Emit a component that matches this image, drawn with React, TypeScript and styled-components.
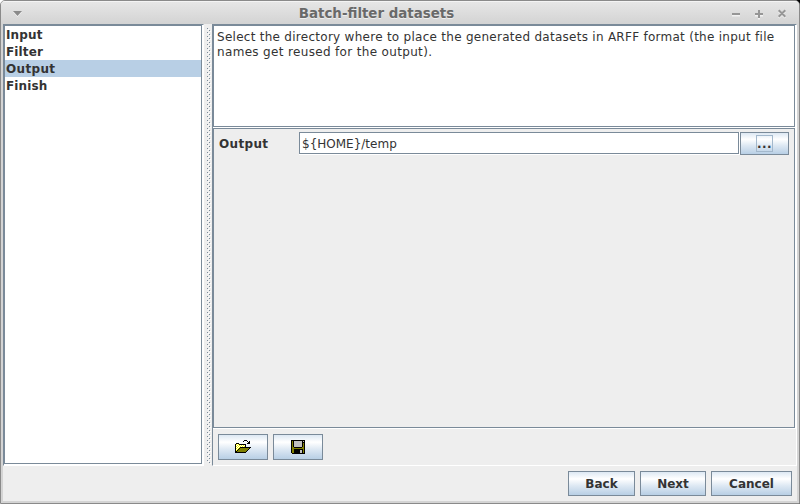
import React from "react";
import styled, { createGlobalStyle, css } from "styled-components";

const GlobalStyle = createGlobalStyle`
  * { box-sizing: border-box; }
  body {
    margin: 0;
    background: linear-gradient(90deg, #fff 50%, #000 50%);
    font-family: "DejaVu Sans", sans-serif;
    font-size: 12px;
    color: #333;
  }
`;

const Window = styled.div`
  width: 800px;
  height: 504px;
  display: flex;
  flex-direction: column;
  border: 1px solid #8a8a8a;
  border-radius: 5px 5px 0 0;
  background: #d4d4d4;
  overflow: hidden;
`;

const TitleBar = styled.header`
  height: 23px;
  flex: none;
  display: grid;
  grid-template-columns: 75px 601px 1fr;
  align-items: center;
  border-top: 1px solid #f4f4f4;
  background: linear-gradient(#e6e6e6, #d3d3d3);
`;

const Title = styled.h1`
  margin: 0;
  padding-top: 1px;
  text-align: center;
  font-size: 13.4px;
  line-height: 20px;
  color: #696969;
  text-shadow: 0 1px 0 #eee;
`;

const MenuArrow = styled.svg`
  margin: 1px 0 0 11px;
`;

const Controls = styled.svg`
  display: block;
  justify-self: end;
`;

const Client = styled.div`
  margin: 0 2px 2px;
  width: 794px;
  height: 477px;
  background: #eee;
`;

const Split = styled.div`
  display: grid;
  grid-template-columns: 201px 8px 585px;
  height: 442px;
`;

const Pane = styled.section`
  display: flex;
  flex-direction: column;
  border: 1px solid;
  border-color: #7a8a99 #fff #fff #7a8a99;
`;

const ScrollPane = styled.div<{ $height: number; $filled?: boolean }>`
  height: ${(p) => p.$height}px;
  flex: none;
  border: 1px solid #fff;
  border-width: 0 1px 1px 0;
  > div {
    height: 100%;
    border: 1px solid #7a8a99;
    background: ${(p) => (p.$filled ? "#fff" : "#eee")};
  }
`;

const Divider = styled.div`
  display: flex;
  padding: 4px 0 0 3px;
`;

const Steps = styled.ul`
  margin: 0;
  padding: 0;
  list-style: none;
`;

const Step = styled.li<{ $selected?: boolean }>`
  height: 17px;
  padding: 2px 0 0 1px;
  line-height: 14px;
  font-weight: bold;
  letter-spacing: ${(p) => (p.$selected ? 0.35 : 0.15)}px;
  background: ${(p) => (p.$selected ? "#b8cfe5" : "transparent")};
`;

const Description = styled.p`
  margin: 0;
  padding: 4px 0 0 3px;
  line-height: 15px;
  white-space: nowrap;
`;

const Line = styled.span<{ $spacing: number }>`
  display: block;
  letter-spacing: ${(p) => p.$spacing}px;
`;

const Row = styled.div`
  display: flex;
  padding: 3px 0 0 5px;
`;

const Label = styled.label`
  width: 80px;
  padding-top: 1px;
  line-height: 22px;
  font-weight: bold;
  letter-spacing: 0.35px;
`;

const Field = styled.div`
  width: 441px;
  height: 23px;
  border: 1px solid #fff;
  border-width: 0 1px 1px 0;
  > div {
    height: 22px;
    padding: 1px 0 0 2px;
    border: 1px solid #7a8a99;
    background: #fff;
    line-height: 20px;
  }
`;

const metal = css`
  border: 1px solid #7a8a99;
  background: linear-gradient(#dde8f3, #fff 30%, #dde8f3 60%, #b8cfe5);
  color: #333;
  font: bold 12px "DejaVu Sans", sans-serif;
`;

const Button = styled.button<{ $w: number; $h: number }>`
  ${metal}
  width: ${(p) => p.$w}px;
  height: ${(p) => p.$h}px;
  padding: 0;
  display: flex;
  align-items: center;
  justify-content: center;
`;

const IconButton = styled(Button)`
  align-items: flex-start;
  padding-top: 5px;
`;

const FocusBox = styled.span`
  width: 17px;
  height: 17px;
  padding-top: 1px;
  border: 1px solid #a3b8cc;
  line-height: 14px;
  letter-spacing: 0.4px;
`;

const Tools = styled.div`
  display: flex;
  gap: 5px;
  padding: 5px;
`;

const Footer = styled.footer`
  display: flex;
  justify-content: flex-end;
  gap: 5px;
  padding: 5px 5px 0 0;
`;

const COLORS: Record<string, string> = {
  k: "#000",
  o: "#808000",
  g: "#c0c0c0",
  y: "#ffff00",
  w: "#fff",
};

const FOLDER = [
  ".........kkk....",
  "........k...k.k.",
  ".............kk.",
  ".kkk........kkk.",
  "kywykkkkkkk.....",
  "kwywywywywk.....",
  "kywywywywyk.....",
  "kwywykkkkkkkkkkk",
  "kywykoooooooook.",
  "kwykoooooooook..",
  "kykoooooooook...",
  "kkoooooooook....",
  "kkkkkkkkkkk.....",
];

const FLOPPY = [
  "kkkkkkkkkkkkkk",
  "kokggggggggkgk",
  "kokggggggggkkk",
  "kokggggggggkok",
  "kokggggggggkok",
  "kokggggggggkok",
  "kokggggggggkok",
  "kookkkkkkkkook",
  "kooooooooooook",
  "kookkkkkkkkkok",
  "kookkkkkkggkok",
  "kookkkkkkggkok",
  "kookkkkkkggkok",
  ".kkkkkkkkkkkkk",
];

function PixelIcon({ rows }: { rows: string[] }) {
  return (
    <svg width={rows[0].length} height={rows.length} shapeRendering="crispEdges">
      {rows.flatMap((row, y) =>
        [...row].map((c, x) =>
          COLORS[c] ? <rect key={`${x}-${y}`} x={x} y={y} width="1" height="1" fill={COLORS[c]} /> : null
        )
      )}
    </svg>
  );
}

const STEPS = ["Input", "Filter", "Output", "Finish"];

export default function App() {
  return (
    <>
      <GlobalStyle />
      <Window>
        <TitleBar>
          <MenuArrow width="11" height="7">
            <path d="M1 2h9l-4.500 5z" fill="#f2f2f2" />
            <path d="M1 1h9L5.500 6z" fill="#8a8a8a" />
          </MenuArrow>
          <Title>Batch-filter datasets</Title>
          <Controls width="75" height="22" fill="none" strokeWidth="2">
            <path d="M8 13.500h8M31 13.500h8M35 9.500v8M54.700 9.200l6.600 6.600M61.300 9.200l-6.600 6.600" stroke="#f2f2f2" />
            <path d="M8 12h8M31 12h8M35 8v8M54.700 8.200l6.600 6.600M61.300 8.200l-6.600 6.600" stroke="#969696" />
          </Controls>
        </TitleBar>
        <Client>
          <Split>
            <Pane>
              <ScrollPane $height={440} $filled>
                <div>
                  <Steps>
                    {STEPS.map((s) => (
                      <Step key={s} $selected={s === "Output"}>{s}</Step>
                    ))}
                  </Steps>
                </div>
              </ScrollPane>
            </Pane>
            <Divider>
              <svg width="4" height="436" shapeRendering="crispEdges">
                <defs>
                  <pattern id="grip" width="4" height="4" patternUnits="userSpaceOnUse">
                    <path d="M0 0h1v1h-1zM2 2h1v1h-1z" fill="#7a8a99" />
                    <path d="M1 1h1v1h-1zM3 3h1v1h-1z" fill="#fff" />
                  </pattern>
                </defs>
                <rect width="4" height="436" fill="url(#grip)" />
              </svg>
            </Divider>
            <Pane>
              <ScrollPane $height={103} $filled>
                <div>
                  <Description>
                    <Line $spacing={0.273}>
                      Select the directory where to place the generated datasets in ARFF format (the input file
                    </Line>
                    <Line $spacing={0.335}>names get reused for the output).</Line>
                  </Description>
                </div>
              </ScrollPane>
              <ScrollPane $height={301}>
                <div>
                  <Row>
                    <Label>Output</Label>
                    <Field><div>{"${HOME}/temp"}</div></Field>
                    <Button $w={49} $h={23}><FocusBox>...</FocusBox></Button>
                  </Row>
                </div>
              </ScrollPane>
              <Tools>
                <IconButton $w={50} $h={26} aria-label="Open"><PixelIcon rows={FOLDER} /></IconButton>
                <IconButton $w={50} $h={26} aria-label="Save"><PixelIcon rows={FLOPPY} /></IconButton>
              </Tools>
            </Pane>
          </Split>
          <Footer>
            <Button $w={67} $h={25}>Back</Button>
            <Button $w={66} $h={25}>Next</Button>
            <Button $w={81} $h={25}>Cancel</Button>
          </Footer>
        </Client>
      </Window>
    </>
  );
}
